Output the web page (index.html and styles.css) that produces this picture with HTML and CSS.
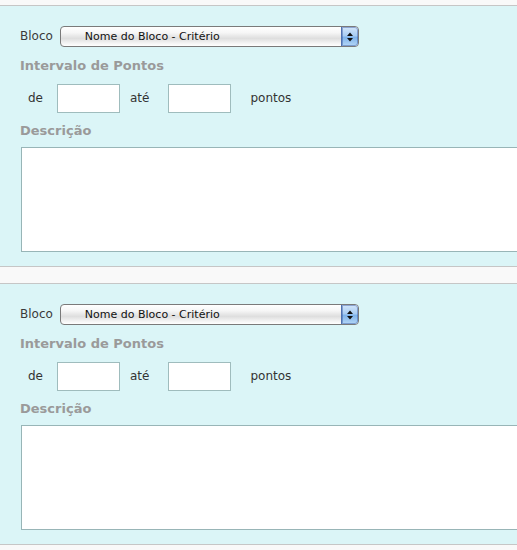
FILE: index.html
```html
<!DOCTYPE html>
<html lang="pt">
<head>
<meta charset="utf-8">
<title>Blocos</title>
<link rel="stylesheet" href="styles.css">
</head>
<body>
  <section class="bloco">
    <div class="row-select">
      <span class="txt">Bloco</span>
      <div class="select">
        <span class="select-value">Nome do Bloco - Critério</span>
        <span class="select-btn">
          <svg width="8" height="12" viewBox="0 0 8 12"><path d="M4 1.5 L7 5 H1 Z" fill="#111"/><path d="M4 10.5 L7 7 H1 Z" fill="#111"/></svg>
        </span>
      </div>
    </div>
    <div class="label">Intervalo de Pontos</div>
    <div class="row-range">
      <span class="txt de">de</span>
      <input class="num" type="text">
      <span class="txt ate">até</span>
      <input class="num" type="text">
      <span class="txt pontos">pontos</span>
    </div>
    <div class="label label-desc">Descrição</div>
    <textarea class="desc"></textarea>
  </section>

  <section class="bloco">
    <div class="row-select">
      <span class="txt">Bloco</span>
      <div class="select">
        <span class="select-value">Nome do Bloco - Critério</span>
        <span class="select-btn">
          <svg width="8" height="12" viewBox="0 0 8 12"><path d="M4 1.5 L7 5 H1 Z" fill="#111"/><path d="M4 10.5 L7 7 H1 Z" fill="#111"/></svg>
        </span>
      </div>
    </div>
    <div class="label">Intervalo de Pontos</div>
    <div class="row-range">
      <span class="txt de">de</span>
      <input class="num" type="text">
      <span class="txt ate">até</span>
      <input class="num" type="text">
      <span class="txt pontos">pontos</span>
    </div>
    <div class="label label-desc">Descrição</div>
    <textarea class="desc"></textarea>
  </section>
</body>
</html>
```

FILE: styles.css
```css
html {
  overflow: hidden;
  background: #f9f9f9;
}
body {
  margin: 0;
  padding-top: 5px;
  background: #f9f9f9;
  font-family: "DejaVu Sans", Verdana, sans-serif;
  font-size: 12px;
  line-height: 15px;
  color: #3a3a3a;
}
.bloco {
  background: #dbf5f7;
  border-top: 1px solid #c6c6c6;
  border-bottom: 1px solid #c6c6c6;
  padding: 20px 0 14px 20px;
  overflow: hidden;
  margin-bottom: 16px;
}
.row-select {
  display: flex;
  align-items: center;
  height: 21px;
}
.txt {
  white-space: nowrap;
}
.select {
  margin-left: 7px;
  width: 299px;
  height: 21px;
  box-sizing: border-box;
  border: 1px solid #7a7a7a;
  border-radius: 4px;
  background: linear-gradient(#ffffff 0%, #f6f6f6 30%, #dedede 60%, #f4f4f4 85%, #ffffff 100%);
  display: flex;
  align-items: center;
  overflow: hidden;
}
.select-value {
  flex: 1;
  padding-left: 24px;
  font-size: 11px;
  color: #111;
  white-space: nowrap;
}
.select-btn {
  width: 16px;
  height: 19px;
  border-left: 1px solid #4f72b0;
  background: linear-gradient(#d3e6fa 0%, #a9cdf3 45%, #7fb3ea 55%, #b5d7f7 100%);
  display: flex;
  align-items: center;
  justify-content: center;
  border-radius: 0 3px 3px 0;
  box-shadow: inset 0 0 0 1px rgba(40, 70, 150, 0.4);
}
.label {
  margin-top: 11px;
  font-size: 13px;
  font-weight: bold;
  color: #9a9a9a;
}
.row-range {
  margin-top: 11px;
  display: flex;
  align-items: center;
  height: 29px;
  color: #333;
}
.de {
  margin-left: 8px;
  margin-right: 14px;
}
.ate {
  margin-left: 10px;
  margin-right: 19px;
}
.pontos {
  margin-left: 19px;
}
.num {
  width: 63px;
  height: 29px;
  box-sizing: border-box;
  border: 1px solid #9fbcbd;
  background: #fff;
  margin: 0;
  padding: 0;
}
.label-desc {
  margin-top: 10px;
}
.desc {
  display: block;
  margin: 9px 0 0 1px;
  width: 620px;
  height: 105px;
  box-sizing: border-box;
  border: 1px solid #98b5b7;
  background: #fff;
  resize: none;
  padding: 0;
}
```
